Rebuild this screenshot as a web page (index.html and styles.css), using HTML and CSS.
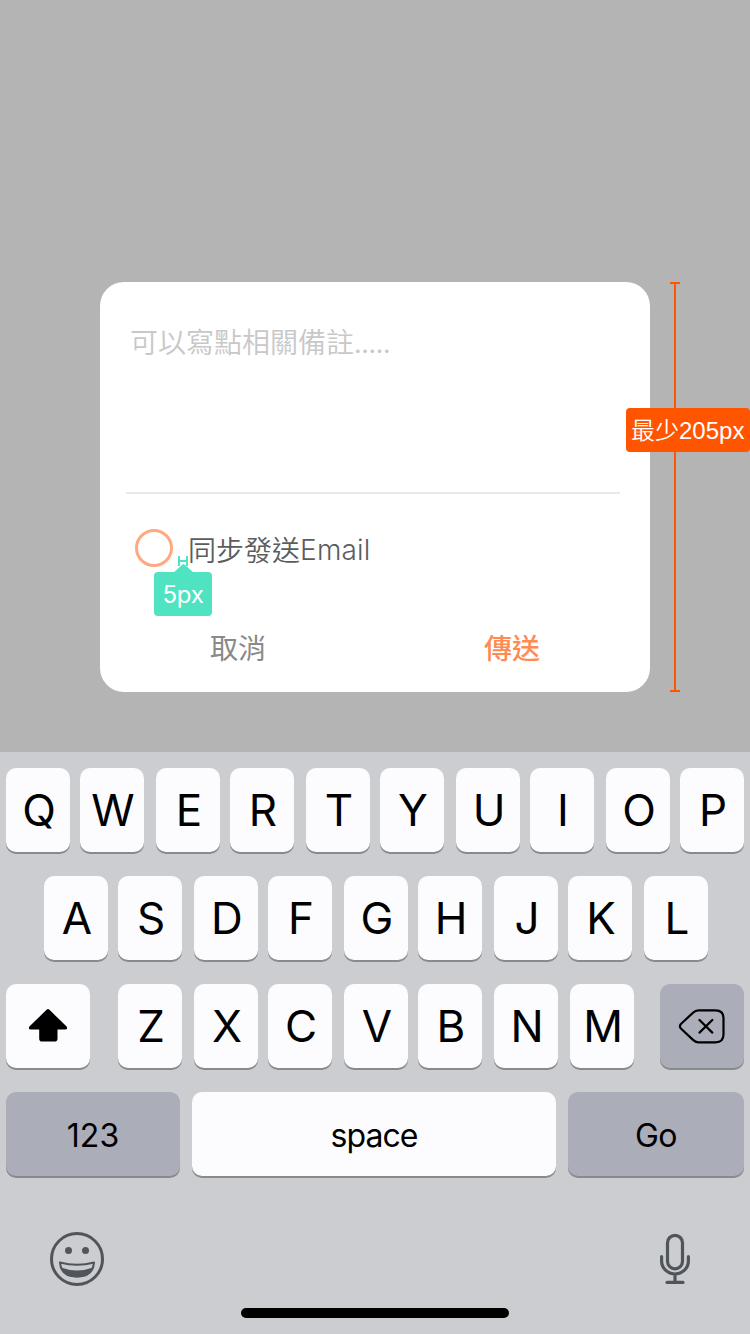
FILE: index.html
```html
<!DOCTYPE html>
<html lang="zh-Hant">
<head>
<meta charset="utf-8">
<title>備註</title>
<link rel="stylesheet" href="styles.css">
</head>
<body>
<div class="screen">
  <main class="stage">
    <section class="dialog">
      <div class="note">可以寫點相關備註<span class="dots">.....</span></div>
      <div class="option">
        <span class="radio"></span>
        <span class="option-label">同步發送<span class="latin">Email</span></span>
        <div class="gap-mark">
          <svg class="gap-shape" width="58" height="60" viewBox="0 0 58 60">
            <path d="M25 0v10M33 0v10M25 5h8" fill="none" stroke="#50e3c2" stroke-width="2"/>
            <path d="M19 17l9.500-8.500q1-1 2 0L40 17z" fill="#50e3c2"/>
          </svg>
          <span class="gap-label">5px</span>
        </div>
      </div>
      <div class="actions">
        <span class="cancel">取消</span>
        <span class="send">傳送</span>
      </div>
    </section>
    <div class="measure"><span class="measure-label">最少<span class="measure-num">205px</span></span></div>
  </main>
  <section class="keyboard">
    <div class="row row-top">
      <span class="key"><b>Q</b></span><span class="key"><b>W</b></span><span class="key"><b>E</b></span><span class="key"><b>R</b></span><span class="key"><b>T</b></span><span class="key"><b>Y</b></span><span class="key"><b>U</b></span><span class="key"><b>I</b></span><span class="key"><b>O</b></span><span class="key"><b>P</b></span>
    </div>
    <div class="row row-home">
      <span class="key"><b>A</b></span><span class="key"><b>S</b></span><span class="key"><b>D</b></span><span class="key"><b>F</b></span><span class="key"><b>G</b></span><span class="key"><b>H</b></span><span class="key"><b>J</b></span><span class="key"><b>K</b></span><span class="key"><b>L</b></span>
    </div>
    <div class="row row-low">
      <span class="key side">
        <svg width="40" height="36" viewBox="0 0 40 36"><path d="M18.800 1.500q1.200-1.200 2.400 0L38.600 18.600q1.500 2.900-1 2.900H29.500v9.200q0 2.800-2.800 2.800H14q-2.800 0-2.800-2.800V21.500H2.400q-2.500 0-1-2.900z"/></svg>
      </span>
      <div class="letters">
        <span class="key"><b>Z</b></span><span class="key wide"><b>X</b></span><span class="key"><b>C</b></span><span class="key wide"><b>V</b></span><span class="key"><b>B</b></span><span class="key wide"><b>N</b></span><span class="key wide"><b>M</b></span>
      </div>
      <span class="key side dark">
        <svg width="48" height="36" viewBox="0 0 48 36" fill="none" stroke="#000" stroke-width="2.200" stroke-linecap="round" stroke-linejoin="round"><path d="M20.500 2.300H37.500Q45.500 2.300 45.500 10V26.500Q45.500 34.300 37.500 34.300H20.500Q17.500 34.300 15 31.900L2.900 20.500Q.9 18.300 2.900 16L15 4.700Q17.500 2.300 20.500 2.300zM21.500 12l12.800 12.600M34.300 12L21.500 24.600"/></svg>
      </span>
    </div>
    <div class="row row-base">
      <span class="key word num dark">123</span>
      <span class="key word space">space</span>
      <span class="key word go dark">Go</span>
    </div>
    <div class="tray">
      <svg width="54" height="54" viewBox="0 0 54 54"><circle cx="27" cy="27" r="25.500" fill="none" stroke="#50555c" stroke-width="3"/><circle cx="18.500" cy="18.500" r="3.500" fill="#50555c"/><circle cx="35.500" cy="18.500" r="3.500" fill="#50555c"/><path d="M10 30.500Q27 35 44 30.500Q43 44.500 27 44.500T10 30.500z" fill="none" stroke="#50555c" stroke-width="2.200" stroke-linejoin="round"/><path d="M11 35.500Q27 41.500 43 35.500Q39 45.500 27 45.500T11 35.500z" fill="#50555c"/></svg>
      <svg width="30" height="52" viewBox="0 0 30 52" fill="none" stroke="#50555c" stroke-width="3.200" stroke-linecap="round"><rect x="7.500" y="2.300" width="15" height="33.500" rx="7.500"/><path d="M1.600 23.500v4.500a13.400 13 0 0 0 26.800 0v-4.500M15 41.500v7M7 49.400h16"/></svg>
    </div>
    <div class="home-bar"></div>
  </section>
</div>
</body>
</html>
```
FILE: styles.css
```css
* { box-sizing: border-box; }
body { margin: 0; font-family: "Inter", "Noto Sans CJK TC", sans-serif; }
svg { display: block; }
.screen { width: 750px; height: 1334px; display: flex; flex-direction: column; overflow: hidden; }
.stage { height: 752px; background: #b4b4b4; display: flex; padding: 282px 0 0 100px; }
.dialog { width: 550px; height: 410px; border-radius: 24px; background: #fff; padding: 0 30px 0 26px; }
.note { height: 212px; border-bottom: 2px solid #e9e9e9; padding: 39px 0 0 4px; font-family: "Noto Sans CJK TC", sans-serif; font-weight: 350; font-size: 28px; line-height: 40px; color: #c8c8c8; white-space: nowrap; }
.dots { letter-spacing: -.3px; }
.option { position: relative; height: 108px; padding: 35px 0 0 9px; display: flex; align-items: flex-start; gap: 15px; }
.radio { width: 38px; height: 38px; border: 3px solid #ffa980; border-radius: 50%; }
.option-label { margin-top: -1px; font-family: "Noto Sans CJK TC", sans-serif; font-weight: 350; font-size: 28px; line-height: 42px; color: #5c5c5c; white-space: nowrap; }
.latin { font-family: "Inter", sans-serif; font-size: 28px; letter-spacing: .2px; position: relative; top: -1px; }
.gap-mark { position: absolute; left: 28px; top: 62px; width: 58px; height: 60px; }
.gap-shape { position: absolute; left: 0; top: 0; }
.gap-label { position: absolute; left: 0; top: 16px; width: 58px; height: 44px; border-radius: 4px; background: #50e3c2; color: #fff; font-weight: 400; font-size: 24px; line-height: 45px; letter-spacing: -.3px; text-align: center; }
.actions { display: flex; justify-content: space-between; padding: 24px 80px 0 84px; font-family: "Noto Sans CJK TC", sans-serif; font-size: 28px; line-height: 42px; font-weight: 400; }
.cancel { color: #8a8a8a; }
.send { color: #ff8b52; font-weight: 500; }
.measure { position: relative; width: 10px; height: 410px; margin-left: 20px; border: solid #ff5500; border-width: 2px 0; background: linear-gradient(#ff5500, #ff5500) center / 2px 100% no-repeat; }
.measure-label { position: absolute; left: -44px; top: 124px; width: 124px; height: 44px; padding-left: 5px; border-radius: 4px; background: #ff5500; color: #fff; font-family: "Noto Sans CJK TC", sans-serif; font-weight: 350; font-size: 24px; line-height: 41px; white-space: nowrap; }
.measure-num { font-family: "Liberation Sans", sans-serif; }
.keyboard { height: 582px; background: #cccdd1; padding: 16px 6px 0; display: flex; flex-direction: column; }
.row { display: flex; height: 84px; margin-bottom: 24px; }
.key { width: 64px; height: 84px; flex: none; border-radius: 10px; background: #fcfcfe; box-shadow: 0 2px 0 #898a8d; display: flex; align-items: center; justify-content: center; }
.key b { font-weight: 400; font-size: 44px; line-height: 84px; padding-left: 2px; }
.row-top, .row-home, .letters { display: flex; gap: 10px; }
.row-home { padding-left: 38px; }
.row-top .key:nth-child(odd):not(:first-child), .row-home .key:nth-child(odd):not(:first-child), .wide { margin-left: 2px; }
.row-low { justify-content: space-between; }
.letters { margin-left: 2px; }
.side { width: 84px; }
.dark { background: #abadb9; }
.row-base { gap: 12px; }
.word { font-size: 32px; line-height: 84px; padding-top: 3px; }
.num { width: 174px; }
.space { width: 364px; letter-spacing: -.9px; }
.go { width: 176px; letter-spacing: -.6px; }
.tray { display: flex; justify-content: space-between; align-items: center; padding: 0 54px 0 44px; margin-top: 32px; height: 54px; }
.home-bar { align-self: center; width: 268px; height: 10px; border-radius: 5px; background: #000; margin-top: 22px; }
```
